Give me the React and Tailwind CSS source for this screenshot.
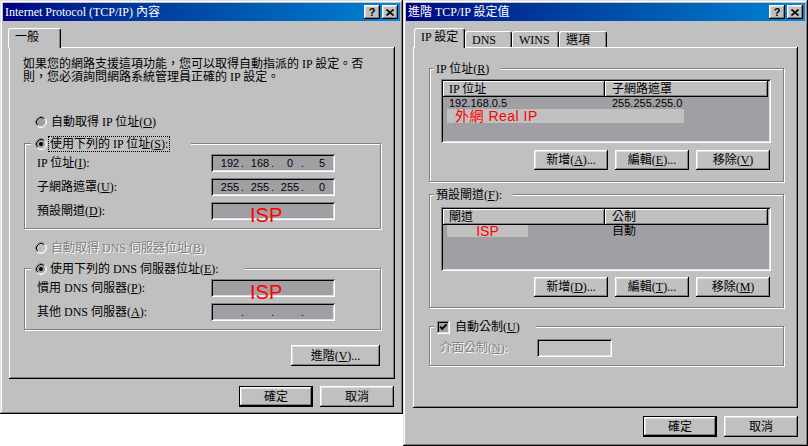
import React from 'react';

// classic win9x bevels
const ui = "font-['Liberation_Serif','Noto_Sans_CJK_TC',serif]";
const sans = "font-['Liberation_Sans','Noto_Sans_CJK_TC',sans-serif]";
const raised = "shadow-[inset_-1px_-1px_#000,inset_1px_1px_#fff,inset_-2px_-2px_#808080,inset_2px_2px_#dfdfdf]";
const thinRaised = "shadow-[inset_-1px_-1px_#000,inset_1px_1px_#fff,inset_-2px_-2px_#808080]";
const sunken = "shadow-[inset_1px_1px_#808080,inset_-1px_-1px_#fff,inset_2px_2px_#000,inset_-2px_-2px_#dfdfdf]";
const windowEdge = "shadow-[inset_-1px_-1px_#000,inset_1px_1px_#dfdfdf,inset_-2px_-2px_#808080,inset_2px_2px_#fff]";
const panelEdge = "shadow-[inset_-1px_-1px_#000,inset_1px_1px_#fff,inset_-2px_-2px_#808080]";
const etched = "border border-[#808080] shadow-[inset_1px_1px_#fff,1px_1px_#fff]";
const embossed = "text-[#808080] [text-shadow:1px_1px_0_#fff]";

function M({ children }) {
    return <span className="underline underline-offset-1">{children}</span>;
}

function CapBtn({ close }) {
    return (
        <div className={`w-[16px] h-[14px] bg-[#c0c0c0] ${raised} flex items-center justify-center`}>
            {close ? (
                <svg width="8" height="7" viewBox="0 0 8 7">
                    <path d="M0.5 0.5L7.5 6.5M7.5 0.5L0.5 6.5" stroke="#000" strokeWidth="1.6" />
                </svg>
            ) : (
                <span className={`text-[11px] font-bold leading-none ${sans}`}>?</span>
            )}
        </div>
    );
}

function TitleBar({ children }) {
    return (
        <div className="h-[18px] flex items-center pl-[2px] pr-[2px] gap-[2px] bg-linear-to-r from-[#000080] to-[#1084d0]">
            <div className="flex-1 text-white text-[12px] leading-[14px] whitespace-nowrap">{children}</div>
            <CapBtn />
            <CapBtn close />
        </div>
    );
}

function Tab({ active, className = '', children }) {
    return (
        <div className={`bg-[#c0c0c0] border-t border-l border-white border-r border-r-black rounded-t-[3px] shadow-[inset_-1px_0_#808080] flex items-center pl-[6px] text-[12px] leading-[14px] whitespace-nowrap ${active ? 'h-[20px] -mb-px relative z-10 pb-[3px]' : 'h-[16px]'} ${className}`}>
            {children}
        </div>
    );
}

function Btn({ className = '', def, children }) {
    return (
        <div className={`flex items-center justify-center bg-[#c0c0c0] text-[12px] leading-[14px] whitespace-nowrap ${def ? 'border border-black' : ''} ${raised} ${className}`}>
            {children}
        </div>
    );
}

function Radio({ checked, disabled }) {
    return (
        <svg width="12" height="12" viewBox="0 0 12 12" className="shrink-0">
            <circle cx="6" cy="6" r="5.5" fill={disabled ? '#c0c0c0' : '#a0a0a4'} stroke="#fff" />
            <path d="M9.89 2.11A5.5 5.5 0 0 0 2.11 9.89" fill="none" stroke="#808080" />
            <path d="M9.18 2.82A4.5 4.5 0 0 0 2.82 9.18" fill="none" stroke="#000" />
            <path d="M2.82 9.18A4.5 4.5 0 0 0 9.18 2.82" fill="none" stroke="#dfdfdf" />
            {checked && <circle cx="6" cy="6" r="2" fill="#000" />}
        </svg>
    );
}

function Check() {
    return (
        <svg width="13" height="13" viewBox="0 0 13 13" className="shrink-0">
            <rect x="0" y="0" width="13" height="13" fill="#fff" />
            <rect x="0" y="0" width="12" height="12" fill="#808080" />
            <rect x="1" y="1" width="11" height="11" fill="#dfdfdf" />
            <rect x="1" y="1" width="10" height="10" fill="#000" />
            <rect x="2" y="2" width="9" height="9" fill="#a0a0a4" />
            <path d="M3.2 5.6L5.2 7.8L9.6 3.4" stroke="#000" strokeWidth="1.9" fill="none" />
        </svg>
    );
}

function RadioRow({ className = '', checked, disabled, children }) {
    return (
        <div className={`flex items-center h-[14px] gap-[4px] text-[12px] leading-[14px] whitespace-nowrap ${className}`}>
            <Radio checked={checked} disabled={disabled} />
            <span className={disabled ? embossed : ''}>{children}</span>
        </div>
    );
}

function Group({ className = '', legend, legendClass = '', children }) {
    return (
        <div className={`${etched} ${className}`}>
            <div className={`-mt-[8px] h-[16px] bg-[#c0c0c0] flex items-center text-[12px] leading-[14px] whitespace-nowrap ${legendClass}`}>
                {legend}
            </div>
            {children}
        </div>
    );
}

function IpField({ parts, isp }) {
    return (
        <div className={`w-[124px] h-[18px] bg-[#a0a0a4] ${sunken} flex items-center pl-[4px] text-[11px] leading-[13px] ${sans}`}>
            {isp ? (
                <div className="flex-1 self-start flex">
                    <span className="mt-[3px] ml-[35px] text-[20px] leading-[20px] text-[#ff0000]">ISP</span>
                </div>
            ) : (
                [0, 1, 2, 3].map((i) => (
                    <div key={i} className="w-[30px] flex">
                        <span className="flex-1 text-center pl-[4px]">{parts[i]}</span>
                        {i < 3 && <span className="w-[4px]">.</span>}
                    </div>
                ))
            )}
        </div>
    );
}

function FieldRow({ label, children }) {
    return (
        <div className="flex items-center h-[18px] ml-[12px]">
            <div className="w-[174px] text-[12px] leading-[14px] whitespace-nowrap">{label}</div>
            {children}
        </div>
    );
}

function ListBox({ className = '', cols, children }) {
    return (
        <div className={`w-[330px] h-[64px] p-[2px] bg-[#a0a0a4] ${sunken} ${className}`}>
            <div className="flex h-[16px]">
                <div className={`w-[162px] pl-[6px] flex items-center bg-[#c0c0c0] ${thinRaised} text-[12px] leading-[14px]`}>{cols[0]}</div>
                <div className={`w-[163px] pl-[7px] flex items-center bg-[#c0c0c0] ${thinRaised} text-[12px] leading-[14px]`}>{cols[1]}</div>
            </div>
            {children}
        </div>
    );
}

function LeftWindow() {
    return (
        <div className={`w-[403px] h-[414px] shrink-0 p-[3px] bg-[#c0c0c0] ${windowEdge} flex flex-col`}>
            <TitleBar>Internet Protocol (TCP/IP) 內容</TitleBar>
            <div className="mt-[7px] ml-[5px] flex items-end h-[19px]">
                <Tab active className="w-[53px]">一般</Tab>
            </div>
            <div className={`ml-[6px] w-[386px] h-[332px] ${panelEdge} flex flex-col items-start`}>
                <p className="mt-[11px] ml-[14px] text-[12px] leading-[13px] whitespace-nowrap">
                    如果您的網路支援這項功能，您可以取得自動指派的 IP 設定。否
                    <br />
                    則，您必須詢問網路系統管理員正確的 IP 設定。
                </p>
                <RadioRow className="mt-[31px] ml-[26px]">
                    自動取得 IP 位址(<M>O</M>)
                </RadioRow>
                <Group
                    className="mt-[14px] ml-[15px] w-[357px] h-[86px]"
                    legendClass="ml-[6px] w-[160px] px-[4px] gap-[2px]"
                    legend={
                        <>
                            <Radio checked />
                            <span className="px-[1px] outline-1 outline-dotted outline-black">
                                使用下列的 IP 位址(<M>S</M>):
                            </span>
                        </>
                    }
                >
                    <div className="mt-[2px] flex flex-col gap-[6px]">
                        <FieldRow label={<>IP 位址(<M>I</M>):</>}>
                            <IpField parts={['192', '168', '0', '5']} />
                        </FieldRow>
                        <FieldRow label={<>子網路遮罩(<M>U</M>):</>}>
                            <IpField parts={['255', '255', '255', '0']} />
                        </FieldRow>
                        <FieldRow label={<>預設閘道(<M>D</M>):</>}>
                            <IpField isp />
                        </FieldRow>
                    </div>
                </Group>
                <RadioRow disabled className="mt-[12px] ml-[26px]">
                    自動取得 DNS 伺服器位址(<M>B</M>)
                </RadioRow>
                <Group
                    className="mt-[13px] ml-[15px] w-[357px] h-[62px]"
                    legendClass="ml-[6px] w-[214px] px-[4px] gap-[3px]"
                    legend={
                        <>
                            <Radio checked />
                            <span>使用下列的 DNS 伺服器位址(<M>E</M>):</span>
                        </>
                    }
                >
                    <div className="mt-[2px] flex flex-col gap-[6px]">
                        <FieldRow label={<>慣用 DNS 伺服器(<M>P</M>):</>}>
                            <IpField isp />
                        </FieldRow>
                        <FieldRow label={<>其他 DNS 伺服器(<M>A</M>):</>}>
                            <IpField parts={['', '', '', '']} />
                        </FieldRow>
                    </div>
                </Group>
                <div className="mt-[15px] self-end mr-[15px]">
                    <Btn className="w-[89px] h-[21px]">進階(<M>V</M>)...</Btn>
                </div>
            </div>
            <div className="mt-[7px] flex justify-end gap-[7px] pr-[6px]">
                <Btn def className="w-[74px] h-[21px]">確定</Btn>
                <Btn className="w-[74px] h-[21px]">取消</Btn>
            </div>
        </div>
    );
}

function RightWindow() {
    return (
        <div className={`w-[405px] h-[446px] shrink-0 p-[3px] bg-[#c0c0c0] ${windowEdge} flex flex-col`}>
            <TitleBar>進階 TCP/IP 設定值</TitleBar>
            <div className="mt-[7px] ml-[8px] flex items-end h-[19px]">
                <Tab active className="w-[51px]">IP 設定</Tab>
                <Tab className="w-[47px] pl-[5px]">DNS</Tab>
                <Tab className="w-[47px]">WINS</Tab>
                <Tab className="w-[48px]">選項</Tab>
            </div>
            <div className={`ml-[7px] w-[385px] h-[361px] ${panelEdge} flex flex-col items-start`}>
                <Group
                    className="mt-[21px] ml-[16px] w-[355px] h-[114px]"
                    legendClass="ml-[4px] w-[67px] px-[2px]"
                    legend={<span>IP 位址(<M>R</M>)</span>}
                >
                    <ListBox className="mt-[2px] ml-[11px]" cols={['IP 位址', '子網路遮罩']}>
                        <div className={`flex h-[12px] items-center text-[11px] leading-[12px] ${sans}`}>
                            <span className="w-[162px] pl-[6px]">192.168.0.5</span>
                            <span className="pl-[7px]">255.255.255.0</span>
                        </div>
                        <div className={`ml-[4px] w-[237px] h-[14px] bg-[#c0c0c0] pl-[8px] flex items-center text-[14px] leading-[14px] tracking-[0.5px] text-[#ff0000] whitespace-nowrap ${sans}`}>
                            外網 Real IP
                        </div>
                    </ListBox>
                    <div className="mt-[7px] flex justify-end gap-[7px] pr-[13px]">
                        <Btn className="w-[74px] h-[20px]">新增(<M>A</M>)...</Btn>
                        <Btn className="w-[74px] h-[20px]">編輯(<M>E</M>)...</Btn>
                        <Btn className="w-[74px] h-[20px]">移除(<M>V</M>)</Btn>
                    </div>
                </Group>
                <Group
                    className="mt-[12px] ml-[16px] w-[355px] h-[114px]"
                    legendClass="ml-[4px] w-[79px] px-[2px]"
                    legend={<span>預設閘道(<M>F</M>):</span>}
                >
                    <ListBox className="mt-[4px] ml-[11px]" cols={['閘道', '公制']}>
                        <div className="flex h-[12px] items-center">
                            <div className="w-[162px]">
                                <div className={`ml-[4px] w-[81px] h-[12px] bg-[#c0c0c0] text-center text-[14px] leading-[12px] text-[#ff0000] ${sans}`}>ISP</div>
                            </div>
                            <span className="pl-[7px] text-[12px] leading-[12px]">自動</span>
                        </div>
                    </ListBox>
                    <div className="mt-[6px] flex justify-end gap-[7px] pr-[13px]">
                        <Btn className="w-[74px] h-[20px]">新增(<M>D</M>)...</Btn>
                        <Btn className="w-[74px] h-[20px]">編輯(<M>T</M>)...</Btn>
                        <Btn className="w-[74px] h-[20px]">移除(<M>M</M>)</Btn>
                    </div>
                </Group>
                <Group
                    className="mt-[18px] ml-[16px] w-[355px] h-[40px]"
                    legendClass="ml-[4px] w-[102px] px-[3px] gap-[5px]"
                    legend={
                        <>
                            <Check />
                            <span>自動公制(<M>U</M>)</span>
                        </>
                    }
                >
                    <div className="mt-[4px] ml-[10px] flex items-center h-[18px]">
                        <div className={`w-[97px] text-[12px] leading-[14px] whitespace-nowrap ${embossed}`}>
                            介面公制(<M>N</M>):
                        </div>
                        <div className={`w-[75px] h-[18px] bg-[#c0c0c0] ${sunken}`} />
                    </div>
                </Group>
            </div>
            <div className="mt-[8px] flex justify-end gap-[7px] pr-[7px]">
                <Btn def className="w-[74px] h-[21px]">確定</Btn>
                <Btn className="w-[74px] h-[21px]">取消</Btn>
            </div>
        </div>
    );
}

export default function App() {
    return (
        <div className={`w-[808px] h-[446px] bg-white flex items-start overflow-hidden text-black ${ui}`}>
            <LeftWindow />
            <RightWindow />
        </div>
    );
}
